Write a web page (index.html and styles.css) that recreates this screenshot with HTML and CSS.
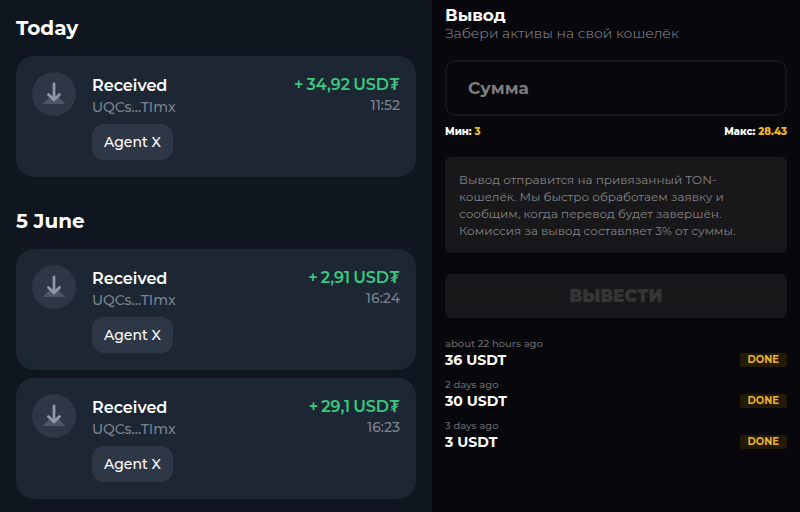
FILE: index.html
```
<!DOCTYPE html>
<html lang="ru">
<head>
  <meta charset="UTF-8">
  <meta name="viewport" content="width=device-width, initial-scale=1.0">
  <title>Вывод</title>
  <link rel="stylesheet" href="styles.css">
</head>
<body>
  <svg class="sprite" aria-hidden="true">
    <symbol id="received" viewBox="0 0 44 44">
      <path d="M10.500 32 L18 24.500 h8 L33.500 32 z" fill="#4c5665"/>
      <path d="M22 12 V27 M16.500 22.500 L22 28 L27.500 22.500" fill="none" stroke="#8e98a9" stroke-width="2.800" stroke-linecap="round" stroke-linejoin="round"/>
    </symbol>
  </svg>

  <div class="screens">
    <section class="history">
      <h2>Today</h2>
      <article class="card">
        <svg class="card-icon"><use href="#received"/></svg>
        <div class="card-info">
          <div class="card-title">Received</div>
          <div class="card-sub">UQCs...TImx</div>
          <div class="chip">Agent X</div>
        </div>
        <div class="card-sum">
          <div class="amount"><span>+</span><span>34,92</span><span>USD₮</span></div>
          <div class="card-sub">11:52</div>
        </div>
      </article>

      <h2>5 June</h2>
      <article class="card">
        <svg class="card-icon"><use href="#received"/></svg>
        <div class="card-info">
          <div class="card-title">Received</div>
          <div class="card-sub">UQCs...TImx</div>
          <div class="chip">Agent X</div>
        </div>
        <div class="card-sum">
          <div class="amount"><span>+</span><span>2,91</span><span>USD₮</span></div>
          <div class="card-sub">16:24</div>
        </div>
      </article>
      <article class="card">
        <svg class="card-icon"><use href="#received"/></svg>
        <div class="card-info">
          <div class="card-title">Received</div>
          <div class="card-sub">UQCs...TImx</div>
          <div class="chip">Agent X</div>
        </div>
        <div class="card-sum">
          <div class="amount"><span>+</span><span>29,1</span><span>USD₮</span></div>
          <div class="card-sub">16:23</div>
        </div>
      </article>
    </section>

    <section class="withdraw">
      <h1>Вывод</h1>
      <p class="lead">Забери активы на свой кошелёк</p>
      <input class="sum" type="text" placeholder="Сумма" aria-label="Сумма">
      <div class="limits">
        <span>Мин: <b>3</b></span>
        <span>Макс: <b>28.43</b></span>
      </div>
      <p class="note">Вывод отправится на привязанный TON-кошелёк. Мы быстро обработаем заявку и сообщим, когда перевод будет завершён. Комиссия за вывод составляет 3% от суммы.</p>
      <button class="submit" type="button" disabled>ВЫВЕСТИ</button>
      <ul class="payouts">
        <li>
          <div>
            <div class="ago">about 22 hours ago</div>
            <div class="paid">36 USDT</div>
          </div>
          <span class="done">DONE</span>
        </li>
        <li>
          <div>
            <div class="ago">2 days ago</div>
            <div class="paid">30 USDT</div>
          </div>
          <span class="done">DONE</span>
        </li>
        <li>
          <div>
            <div class="ago">3 days ago</div>
            <div class="paid">3 USDT</div>
          </div>
          <span class="done">DONE</span>
        </li>
      </ul>
    </section>
  </div>
</body>
</html>
```
FILE: styles.css
```
* {
  box-sizing: border-box;
}
body {
  margin: 0;
  font-family: Montserrat, Inter, "Noto Sans", sans-serif;
  background: #07070c;
  color: #fff;
}
h1, h2, p, ul {
  margin: 0;
  padding: 0;
}
.sprite {
  display: none;
}
.screens {
  display: grid;
  grid-template-columns: 54fr 46fr;
  min-height: 100vh;
}

/* history */
.history {
  padding: 16px 16px 12px;
  background: #0f161f;
}
.history h2 {
  margin-bottom: 16px;
  font-size: 20px;
  line-height: 24px;
  font-weight: 700;
}
.card + h2 {
  margin-top: 32px;
}
.card {
  display: flex;
  gap: 16px;
  padding: 16px 16px 17px;
  border-radius: 18px;
  background: #1d2733;
}
.card + .card {
  margin-top: 8px;
}
.card-icon {
  flex: none;
  width: 44px;
  height: 44px;
  border-radius: 50%;
  background: #2d3745;
}
.card-info {
  flex: 1;
}
.card-title {
  padding-top: 3px;
  font-size: 16px;
  line-height: 22px;
  font-weight: 600;
}
.card-sub {
  font-size: 14px;
  line-height: 20px;
  font-weight: 500;
  color: #79818f;
}
.chip {
  display: inline-block;
  margin-top: 7px;
  padding: 0 12px;
  border-radius: 12px;
  background: #2d3745;
  font-size: 14px;
  line-height: 36px;
  font-weight: 500;
}
.card-sum {
  text-align: right;
}
.amount {
  display: flex;
  justify-content: flex-end;
  gap: 3px;
  padding-top: 3px;
  font-size: 16px;
  line-height: 20px;
  font-weight: 600;
  color: #3bc77f;
}

/* withdraw */
.withdraw {
  padding: 6px 13px 12px;
}
.withdraw h1 {
  font-size: 17px;
  line-height: 18px;
  font-weight: 700;
}
.lead {
  font-size: 14px;
  line-height: 18px;
  font-weight: 300;
  color: #96969a;
}
.sum {
  display: block;
  width: 100%;
  height: 56px;
  margin-top: 18px;
  padding: 0 21px;
  border: 2px solid #141419;
  border-radius: 10px;
  background: transparent;
  color: #fff;
  font: inherit;
  font-size: 17px;
  font-weight: 700;
}
.sum::placeholder {
  color: #7d7d80;
}
.limits {
  display: flex;
  justify-content: space-between;
  margin-top: 8px;
  font-size: 10px;
  line-height: 15px;
  font-weight: 800;
}
.limits b {
  font-weight: 800;
  color: #f0b429;
}
.note {
  margin-top: 18px;
  padding: 14px;
  border-radius: 6px;
  background: #18181a;
  font-size: 12px;
  line-height: 17px;
  font-weight: 400;
  color: #838385;
}
.submit {
  display: block;
  width: 100%;
  height: 44px;
  margin-top: 21px;
  border: none;
  border-radius: 6px;
  background: #18181a;
  color: #353537;
  font: inherit;
  font-size: 17px;
  font-weight: 900;
}
.payouts {
  display: grid;
  gap: 9px;
  margin-top: 19px;
  list-style: none;
}
.payouts li {
  display: flex;
  justify-content: space-between;
  align-items: flex-end;
}
.ago {
  font-size: 10px;
  line-height: 14px;
  font-weight: 500;
  color: #6a6a6e;
}
.paid {
  font-size: 14px;
  line-height: 18px;
  font-weight: 700;
}
.done {
  margin-bottom: 2px;
  padding: 0 8px;
  border-radius: 3px;
  background: #231a08;
  color: #e8b02c;
  font-size: 10px;
  line-height: 14px;
  font-weight: 700;
}
```
